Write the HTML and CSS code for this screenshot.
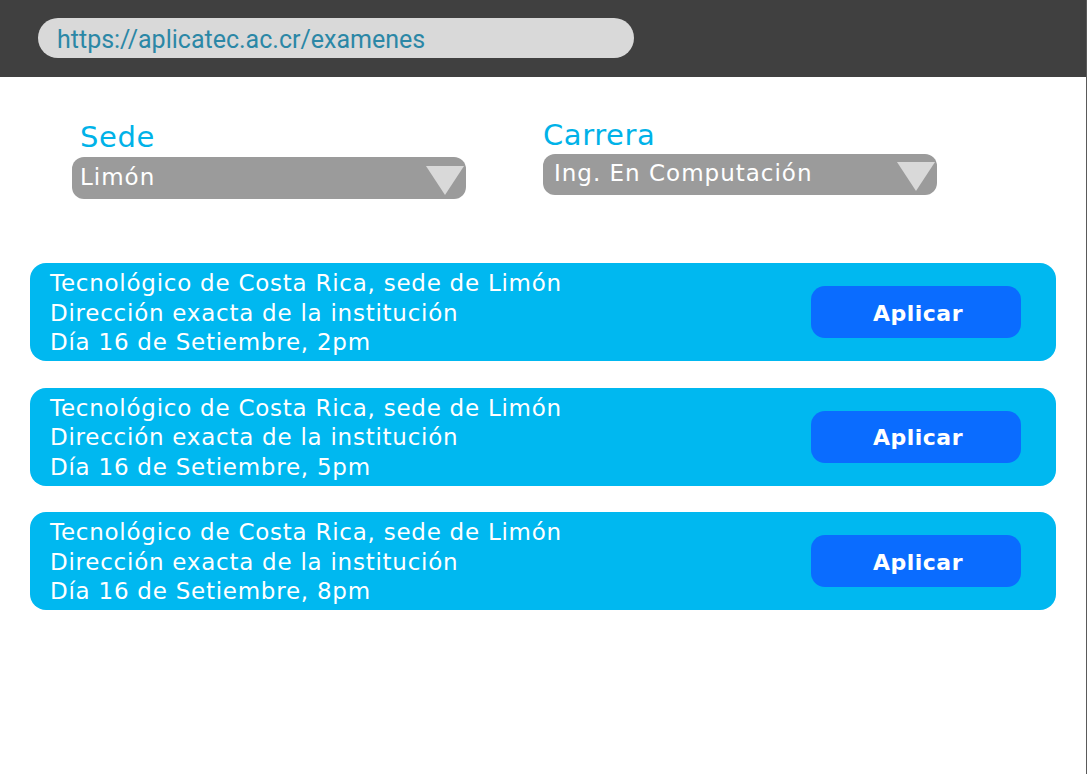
FILE: index.html
```html
<!DOCTYPE html>
<html lang="es">
<head>
<meta charset="utf-8">
<title>Exámenes</title>
<link rel="stylesheet" href="styles.css">
</head>
<body>
<div class="page">
  <header class="topbar">
    <div class="url">https://aplicatec.ac.cr/examenes</div>
  </header>
  <section class="filters">
    <div class="field field-sede">
      <div class="label">Sede</div>
      <div class="select">
        <span>Limón</span>
        <svg class="arrow" viewBox="0 0 38 29" width="38" height="29"><polygon points="0,0 38,0 19,29" fill="#d9d9d9"/></svg>
      </div>
    </div>
    <div class="field field-carrera">
      <div class="label">Carrera</div>
      <div class="select">
        <span>Ing. En Computación</span>
        <svg class="arrow" viewBox="0 0 38 29" width="38" height="29"><polygon points="0,0 38,0 19,29" fill="#d9d9d9"/></svg>
      </div>
    </div>
  </section>
  <section class="list">
    <div class="card">
      <div class="info">
        <div>Tecnológico de Costa Rica, sede de Limón</div>
        <div>Dirección exacta de la institución</div>
        <div>Día 16 de Setiembre, 2pm</div>
      </div>
      <button class="apply">Aplicar</button>
    </div>
    <div class="card">
      <div class="info">
        <div>Tecnológico de Costa Rica, sede de Limón</div>
        <div>Dirección exacta de la institución</div>
        <div>Día 16 de Setiembre, 5pm</div>
      </div>
      <button class="apply">Aplicar</button>
    </div>
    <div class="card">
      <div class="info">
        <div>Tecnológico de Costa Rica, sede de Limón</div>
        <div>Dirección exacta de la institución</div>
        <div>Día 16 de Setiembre, 8pm</div>
      </div>
      <button class="apply">Aplicar</button>
    </div>
  </section>
</div>
</body>
</html>
```

FILE: styles.css
```css
html, body {
  margin: 0;
  padding: 0;
  background: #ffffff;
}
body {
  font-family: "DejaVu Sans", "Open Sans", sans-serif;
}
.page {
  width: 1086px;
  height: 774px;
  border-right: 1px solid #5a5a5a;
  box-sizing: content-box;
  overflow: hidden;
}
.topbar {
  height: 77px;
  background: #404040;
  padding: 18px 0 0 38px;
  box-sizing: border-box;
}
.url {
  width: 596px;
  height: 40px;
  background: #d9d9d9;
  border-radius: 20px;
  box-sizing: border-box;
  padding-left: 19px;
  font-family: Roboto, "Liberation Sans", sans-serif;
  font-size: 25px;
  line-height: 44px;
  color: #2b87a6;
}
.filters {
  display: flex;
  padding: 40px 0 0 72px;
  gap: 77px;
  height: 186px;
  box-sizing: border-box;
}
.field {
  display: flex;
  flex-direction: column;
  width: 394px;
}
.label {
  font-size: 29px;
  line-height: 40px;
  color: #00b2e8;
  letter-spacing: 0.6px;
}
.field-sede .label {
  padding-left: 8px;
}
.field-carrera .label {
  margin-top: -1px;
  line-height: 38px;
}
.select {
  height: 42px;
  background: #9b9b9b;
  border-radius: 12px;
  display: flex;
  align-items: center;
  justify-content: space-between;
  padding: 0 2px 0 8px;
  color: #ffffff;
  font-size: 23px;
  letter-spacing: 1px;
}
.field-sede .select span {
  margin-top: -2px;
}
.field-carrera .select {
  height: 41px;
  padding-left: 11px;
}
.field-carrera .select span {
  margin-top: -4px;
}
.arrow {
  display: block;
  margin-top: 4px;
}
.list {
  display: flex;
  flex-direction: column;
  gap: 26.5px;
  padding-left: 30px;
}
.card {
  width: 1026px;
  height: 98px;
  box-sizing: border-box;
  background: #00b8f0;
  border-radius: 16px;
  display: flex;
  align-items: center;
  justify-content: space-between;
  padding: 0 35px 0 20px;
}
.info {
  color: #ffffff;
  font-size: 23px;
  line-height: 29.5px;
  letter-spacing: 0.75px;
  margin-top: 3px;
}
.apply {
  width: 210px;
  height: 52px;
  border: none;
  border-radius: 14px;
  background: #0a6cff;
  color: #ffffff;
  font-family: "DejaVu Sans", sans-serif;
  font-weight: bold;
  font-size: 22px;
  letter-spacing: 0.5px;
  padding: 2px 0 0 4px;
}
```
